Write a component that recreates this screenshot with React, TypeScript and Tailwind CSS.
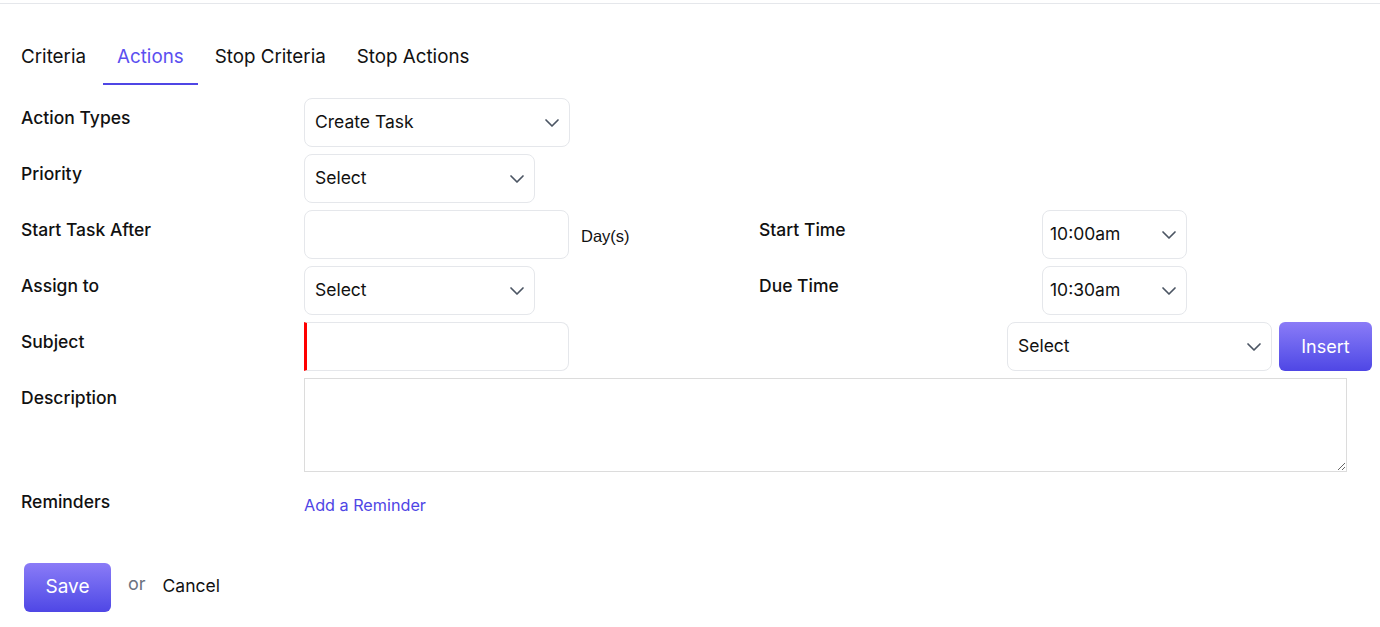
import { ChevronDown } from "lucide-react"

const font = { fontFamily: "Inter, 'Noto Sans', sans-serif" }

function Select({ value, width, pl = "pl-[10px]" }: { value: string; width: string; pl?: string }) {
  return (
    <div className={`${width} h-[49px] border border-[#e5e7eb] rounded-lg bg-white flex items-center justify-between ${pl} pr-[5px] text-[17.5px] text-[#111]`}>
      <span>{value}</span>
      <ChevronDown size={24} strokeWidth={1.7} className="text-[#4b5563]" />
    </div>
  )
}

function Label({ text }: { text: string }) {
  return <div className="w-[283px] shrink-0 pt-2 text-[17.5px] leading-6 font-medium text-[#111]">{text}</div>
}

export default function App() {
  const tabs = ["Criteria", "Actions", "Stop Criteria", "Stop Actions"]
  return (
    <div className="min-h-[627px] bg-white pt-[3px]" style={font}>
      <div className="border-t border-[#e5e7eb]" />
      <div className="flex gap-[3px] pl-[7px] mt-[39px]">
        {tabs.map(t => (
          <div
            key={t}
            className={`px-[14px] pb-[12px] text-[18.8px] leading-7 border-b-2 ${t === "Actions" ? "border-[#4f46e5] text-[#5b4ff0]" : "border-transparent text-[#111]"}`}
          >
            {t}
          </div>
        ))}
      </div>

      <div className="pl-[21px] mt-[13px] flex flex-col gap-[7px]">
        <div className="flex">
          <Label text="Action Types" />
          <Select value="Create Task" width="w-[266px]" />
        </div>
        <div className="flex">
          <Label text="Priority" />
          <Select value="Select" width="w-[231px]" />
        </div>
        <div className="flex">
          <Label text="Start Task After" />
          <input className="w-[265px] h-[49px] border border-[#e5e7eb] rounded-lg bg-white outline-none" />
          <div className="w-[190px] pl-3 pt-[14px] text-[16.5px] text-[#111]" style={{ fontFamily: "'Liberation Sans', Arial, sans-serif" }}>Day(s)</div>
          <Label text="Start Time" />
          <Select value="10:00am" width="w-[145px]" pl="pl-[7px]" />
        </div>
        <div className="flex">
          <Label text="Assign to" />
          <Select value="Select" width="w-[231px]" />
          <div className="w-[224px]" />
          <Label text="Due Time" />
          <Select value="10:30am" width="w-[145px]" pl="pl-[7px]" />
        </div>
        <div className="flex">
          <Label text="Subject" />
          <input className="w-[265px] h-[49px] border border-[#e5e7eb] border-l-[3px] border-l-[#ff0000] rounded-r-lg bg-white outline-none" />
          <div className="w-[438px]" />
          <Select value="Select" width="w-[265px]" />
          <button className="ml-[7px] w-[93px] h-[49px] rounded-md bg-gradient-to-b from-[#8b7bf7] to-[#4f46e5] text-white text-[18px]">
            Insert
          </button>
        </div>
        <div className="flex">
          <Label text="Description" />
          <textarea className="w-[1043px] h-[94px] border border-[#dcdcdc] bg-white outline-none" />
        </div>
        <div className="flex mt-[3px]">
          <Label text="Reminders" />
          <a className="pt-[11px] text-[16.2px] leading-6 text-[#4f46e5] cursor-pointer">Add a Reminder</a>
        </div>
      </div>

      <div className="flex items-center pl-[24px] mt-[46px]">
        <button className="w-[87px] h-[49px] rounded-md bg-gradient-to-b from-[#8b7bf7] to-[#4f46e5] text-white text-[19px]">
          Save
        </button>
        <span className="ml-[17px] text-[18px] text-[#6b7280] -mt-[8px]">or</span>
        <span className="ml-[17px] text-[17.5px] text-[#111] -mt-[2px]">Cancel</span>
      </div>
    </div>
  )
}
